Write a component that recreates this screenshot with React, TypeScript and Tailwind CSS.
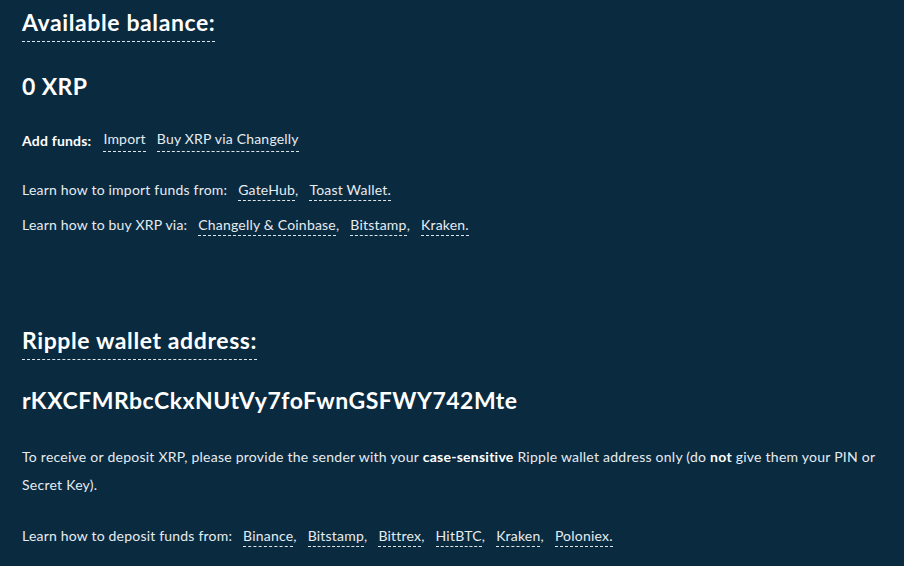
function L({ children }: { children: React.ReactNode }) {
  return (
    <span className="cursor-pointer border-b border-dashed border-[#dfe6eb] pb-[2px] text-[#e6ecf0]">{children}</span>
  );
}

export default function App() {
  return (
    <div className="min-h-[566px] w-full bg-[#0a2a40] px-[22px] pt-[8px] text-[#e6ecf0] font-['Lato','Liberation_Sans',sans-serif]">
      <section>
        <h2 className="inline-block border-b border-dashed border-[#dfe6eb] pb-[5px] text-[23px] font-bold leading-[28px] tracking-[0.6px] text-white">
          Available balance:
        </h2>
        <div className="mt-[30px] text-[23px] font-bold leading-[28px] tracking-[0.4px] text-white">0 XRP</div>
        <div className="mt-[29px] flex items-center gap-[12px] text-[14px] leading-[20px] tracking-[0.2px]">
          <span className="font-bold text-white">Add funds:</span>
          <span className="flex gap-[11px]">
            <L>Import</L>
            <L>Buy XRP via Changelly</L>
          </span>
        </div>
        <div className="mt-[28px] text-[14px] leading-[20px] tracking-[0.2px]">
          Learn how to import funds from:
          <span className="ml-[11px]"><L>GateHub</L>,</span>
          <span className="ml-[11px]"><L>Toast Wallet.</L></span>
        </div>
        <div className="mt-[15px] text-[14px] leading-[20px] tracking-[0.2px]">
          Learn how to buy XRP via:
          <span className="ml-[11px]"><L>Changelly &amp; Coinbase</L>,</span>
          <span className="ml-[11px]"><L>Bitstamp</L>,</span>
          <span className="ml-[11px]"><L>Kraken.</L></span>
        </div>
      </section>
      <section className="mt-[91px]">
        <h2 className="inline-block border-b border-dashed border-[#dfe6eb] pb-[5px] text-[23px] font-bold leading-[28px] tracking-[0.6px] text-white">
          Ripple wallet address:
        </h2>
        <div className="mt-[26px] text-[23px] font-bold leading-[28px] tracking-[0.5px] text-white">rKXCFMRbcCkxNUtVy7foFwnGSFWY742Mte</div>
        <p className="mt-[29px] text-[14px] leading-[28px] tracking-[0.25px]">
          To receive or deposit XRP, please provide the sender with your <b className="text-white">case-sensitive</b> Ripple wallet address only (do <b className="text-white">not</b> give them your PIN or Secret Key).
        </p>
        <div className="mt-[27px] text-[14px] leading-[20px] tracking-[0.2px]">
          Learn how to deposit funds from:
          <span className="ml-[11px]"><L>Binance</L>,</span>
          <span className="ml-[11px]"><L>Bitstamp</L>,</span>
          <span className="ml-[11px]"><L>Bittrex</L>,</span>
          <span className="ml-[11px]"><L>HitBTC</L>,</span>
          <span className="ml-[11px]"><L>Kraken</L>,</span>
          <span className="ml-[11px]"><L>Poloniex.</L></span>
        </div>
      </section>
    </div>
  );
}
